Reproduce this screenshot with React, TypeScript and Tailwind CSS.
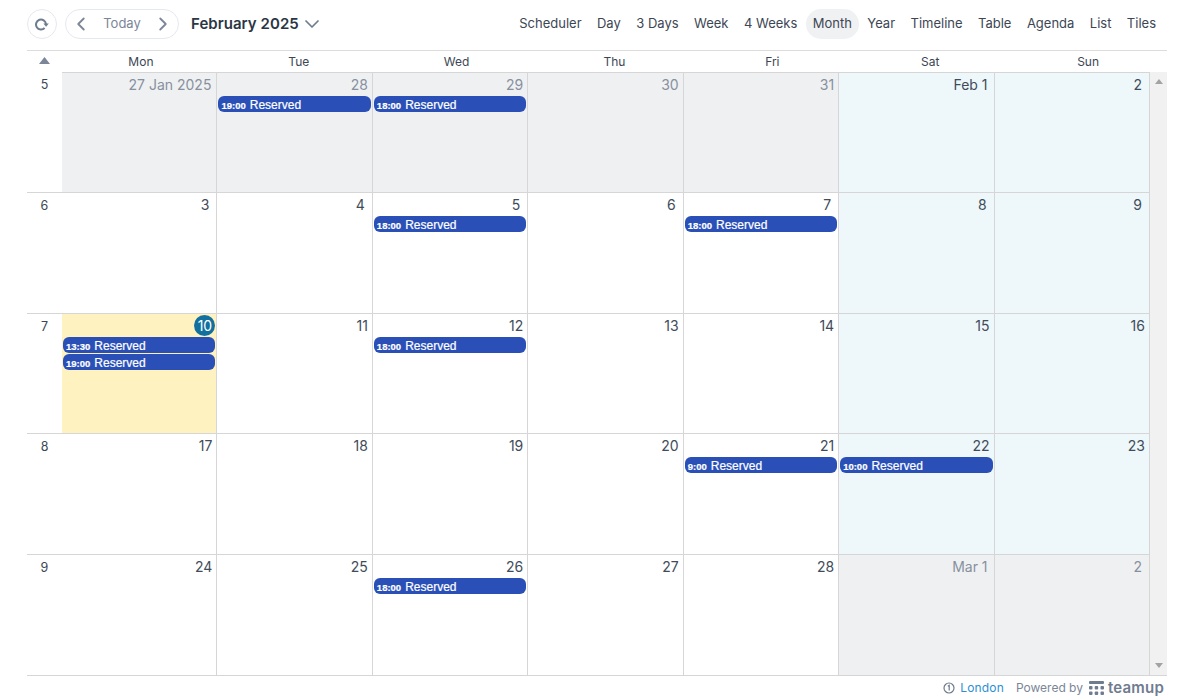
import { ChevronDown, ChevronLeft, ChevronRight } from "lucide-react";

type Ev = { time: string };
type Cell = { label: string; tone?: "out" | "weekend" | "today"; events?: Ev[] };

const views = ["Scheduler", "Day", "3 Days", "Week", "4 Weeks", "Month", "Year", "Timeline", "Table", "Agenda", "List", "Tiles"];
const dayNames = ["Mon", "Tue", "Wed", "Thu", "Fri", "Sat", "Sun"];

const weeks: { num: number; cells: Cell[] }[] = [
  {
    num: 5,
    cells: [
      { label: "27 Jan 2025", tone: "out" },
      { label: "28", tone: "out", events: [{ time: "19:00" }] },
      { label: "29", tone: "out", events: [{ time: "18:00" }] },
      { label: "30", tone: "out" },
      { label: "31", tone: "out" },
      { label: "Feb 1", tone: "weekend" },
      { label: "2", tone: "weekend" },
    ],
  },
  {
    num: 6,
    cells: [
      { label: "3" },
      { label: "4" },
      { label: "5", events: [{ time: "18:00" }] },
      { label: "6" },
      { label: "7", events: [{ time: "18:00" }] },
      { label: "8", tone: "weekend" },
      { label: "9", tone: "weekend" },
    ],
  },
  {
    num: 7,
    cells: [
      { label: "10", tone: "today", events: [{ time: "13:30" }, { time: "19:00" }] },
      { label: "11" },
      { label: "12", events: [{ time: "18:00" }] },
      { label: "13" },
      { label: "14" },
      { label: "15", tone: "weekend" },
      { label: "16", tone: "weekend" },
    ],
  },
  {
    num: 8,
    cells: [
      { label: "17" },
      { label: "18" },
      { label: "19" },
      { label: "20" },
      { label: "21", events: [{ time: "9:00" }] },
      { label: "22", tone: "weekend", events: [{ time: "10:00" }] },
      { label: "23", tone: "weekend" },
    ],
  },
  {
    num: 9,
    cells: [
      { label: "24" },
      { label: "25" },
      { label: "26", events: [{ time: "18:00" }] },
      { label: "27" },
      { label: "28" },
      { label: "Mar 1", tone: "out" },
      { label: "2", tone: "out" },
    ],
  },
];

function labelPad(label: string) {
  if (label.length === 1) return "pr-[7px]";
  if (label.length === 2) return "pr-[4px]";
  return label.length > 5 ? "pr-[5px]" : "pr-[6px]";
}

function DayCell({ cell }: { cell: Cell }) {
  const bg =
    cell.tone === "out" ? "bg-[#eff0f2]" : cell.tone === "weekend" ? "bg-[#eef7fa]" : cell.tone === "today" ? "bg-[#fdf2c0]" : "bg-white";
  return (
    <div className={`${bg} border-r border-[#d6d6d6] min-w-0 flex flex-col`}>
      {cell.tone === "today" ? (
        <div className="h-[23px] flex justify-end items-start pt-[1px] pr-[1px]">
          <span className="w-[21px] h-[21px] rounded-full bg-[#11709f] text-white text-[14px] leading-[21px] text-center">{cell.label}</span>
        </div>
      ) : (
        <div className={`h-[23px] ${labelPad(cell.label)} text-right text-[14px] leading-[24px] ${cell.tone === "out" ? "text-[#87909e]" : "text-[#414c5a]"}`}>
          {cell.label}
        </div>
      )}
      <div className="flex flex-col gap-[1px] px-[1px]">
        {cell.events?.map((ev, i) => (
          <div
            key={i}
            className="h-[16px] rounded-[6px] bg-[#2a50b8] text-white pl-[3px] flex items-baseline gap-[4px] leading-[18px] font-['Liberation_Sans',sans-serif] overflow-hidden"
          >
            <span className="text-[9.5px] font-bold [-webkit-text-stroke:0.2px_white]">{ev.time}</span>
            <span className="text-[12px] [-webkit-text-stroke:0.2px_white]">Reserved</span>
          </div>
        ))}
      </div>
    </div>
  );
}

export default function App() {
  return (
    <div className="h-[700px] bg-white pl-[27px] pr-[28px] flex flex-col font-['Inter',sans-serif] text-[#2d3846] overflow-hidden">
      <div className="h-[50px] flex items-start pt-[9px] shrink-0">
        <button className="w-[30px] h-[30px] rounded-full border border-[#e6e8ef] flex items-center justify-center">
          <svg width="14" height="13" viewBox="0 0 14 13" fill="none">
            <path d="M9.6 10 A5 5 0 1 1 11 6" stroke="#6f7c8f" strokeWidth="2" />
            <path d="M8.4 5.4 L13.8 5.4 L11.1 8.8 Z" fill="#6f7c8f" />
          </svg>
        </button>
        <div className="ml-[8px] w-[114px] h-[30px] rounded-full border border-[#e6e8ef] flex items-center justify-between px-[4px] text-[#7b8698]">
          <ChevronLeft className="w-[22px] h-[22px]" strokeWidth={2} />
          <span className="text-[13px]">Today</span>
          <ChevronRight className="w-[22px] h-[22px]" strokeWidth={2} />
        </div>
        <div className="ml-[12px] h-[30px] flex items-center gap-[1px]">
          <span className="text-[15px] font-semibold text-[#2b3644] tracking-[0.05px]">February 2025</span>
          <ChevronDown className="w-[24px] h-[24px] text-[#6f7c8f]" strokeWidth={1.7} />
        </div>
        <div className="ml-auto flex gap-[1.45px] pr-[4px]">
          {views.map((v) => (
            <div key={v} className={`h-[30px] px-[7px] rounded-[15px] text-[13px] leading-[29px] text-[#3c4654] ${v === "Month" ? "bg-[#f0f1f2]" : ""}`}>
              {v}
            </div>
          ))}
        </div>
      </div>

      <div className="h-[22px] shrink-0 border-t border-[#dcdcdc] flex">
        <div className="w-[35px] flex justify-center pt-[6px]">
          <svg width="11" height="7" viewBox="0 0 11 7">
            <path d="M5.5 0 L11 7 L0 7 Z" fill="#7b8698" />
          </svg>
        </div>
        <div className="flex-1 grid grid-cols-7 text-[12px] leading-[22px] text-center text-[#3c4654]">
          {dayNames.map((d) => (
            <div key={d}>{d}</div>
          ))}
        </div>
      </div>

      <div className="h-[604px] shrink-0 flex border-b border-[#d6d6d6]">
        <div className="flex-1 min-w-0 grid grid-rows-[120px_121px_120px_121px_121px]">
          {weeks.map((w, i) => (
            <div key={w.num} className={`flex min-h-0 ${i === 0 ? "" : "border-t border-[#d6d6d6]"}`}>
              <div className="w-[35px] shrink-0 text-center text-[12.5px] leading-[26px] text-[#3c4654]">{w.num}</div>
              <div className={`flex-1 grid grid-cols-7 ${i === 0 ? "border-t border-[#d6d6d6]" : ""}`}>
                {w.cells.map((c, j) => (
                  <DayCell key={j} cell={c} />
                ))}
              </div>
            </div>
          ))}
        </div>
        <div className="w-[17px] shrink-0 bg-[#f1f1f1] flex flex-col justify-between items-center py-[7px]">
          <svg width="8" height="5" viewBox="0 0 8 5">
            <path d="M4 0 L8 5 L0 5 Z" fill="#a3a3a3" />
          </svg>
          <svg width="8" height="5" viewBox="0 0 8 5">
            <path d="M0 0 L8 0 L4 5 Z" fill="#a3a3a3" />
          </svg>
        </div>
      </div>

      <div className="flex-1 flex items-center justify-end pr-[3px] pb-[1px] text-[12px]">
        <svg width="12" height="12" viewBox="0 0 12 12" fill="none" stroke="#6f7c8f" strokeWidth="1.2">
          <circle cx="6" cy="6" r="5" />
          <path d="M4.8 4.2 L6.2 3.4 V8.6" />
        </svg>
        <span className="ml-[5px] text-[#2c8fd4] tracking-[0.15px]">London</span>
        <span className="ml-[12px] text-[#7b8698]">Powered by</span>
        <svg className="ml-[6px]" width="15" height="14" viewBox="0 0 15 14" fill="#6f7c8f">
          <rect x="0" y="0" width="15" height="3" rx="1" />
          <rect x="0" y="5" width="3.5" height="3.5" rx="1" />
          <rect x="5.7" y="5" width="3.5" height="3.5" rx="1" />
          <rect x="11.5" y="5" width="3.5" height="3.5" rx="1" />
          <rect x="0" y="10.5" width="3.5" height="3.5" rx="1" />
          <rect x="5.7" y="10.5" width="3.5" height="3.5" rx="1" />
          <rect x="11.5" y="10.5" width="3.5" height="3.5" rx="1" />
        </svg>
        <span className="ml-[4px] text-[15px] font-semibold text-[#6f7c8f] leading-none tracking-[0.2px]">teamup</span>
      </div>
    </div>
  );
}
